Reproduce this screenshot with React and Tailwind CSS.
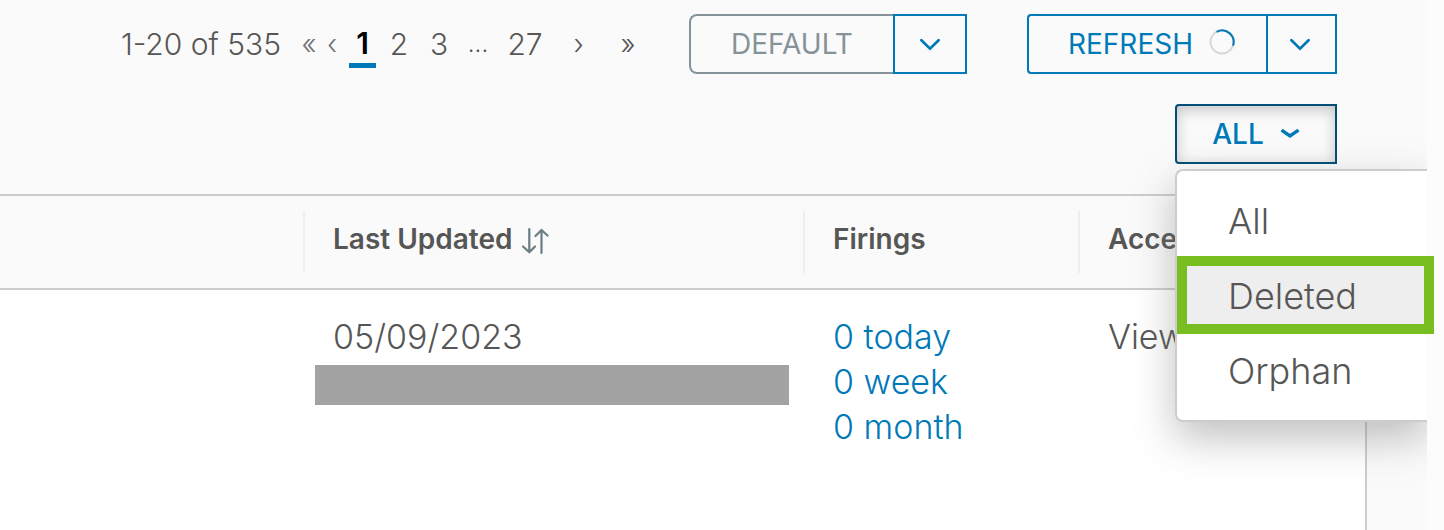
import React from "react";

function Chevron({ small }) {
  return small ? (
    <svg className="h-5 w-5" viewBox="0 0 20 20" fill="none" stroke="currentColor" strokeWidth="3.400" aria-hidden="true">
      <path d="M1.500 6.200 10 12l8.500-5.800" />
    </svg>
  ) : (
    <svg className="h-5 w-5" viewBox="0 0 20 20" fill="none" stroke="currentColor" strokeWidth="2.700" strokeLinecap="round" aria-hidden="true">
      <path d="M1.400 6.200 10 14.700l8.600-8.500" />
    </svg>
  );
}

function Spinner() {
  return (
    <svg className="mb-1 h-[26px] w-[26px]" viewBox="0 0 26 26" fill="none" aria-hidden="true">
      <circle cx="13" cy="13" r="11.500" stroke="#d5d5d5" strokeWidth="1.800" />
      <path d="M7.600 2.850A11.500 11.500 0 0 1 24 16.600" stroke="#0079b8" strokeWidth="2" />
    </svg>
  );
}

function SortIcon() {
  return (
    <svg className="h-7 w-7" viewBox="0 0 28 28" fill="none" stroke="#6a7c84" strokeWidth="2.200" strokeLinecap="round" strokeLinejoin="round" aria-hidden="true">
      <path d="M8.300 2v23M2 19.500l6.300 5.800 5.700-5.800" />
      <path d="M20.500 26V3M14.500 9l6-6 6 5.500" />
    </svg>
  );
}

function Pagination() {
  const item = "flex h-10 items-center justify-center";
  return (
    <nav aria-label="Pages" className="mr-9 flex items-center text-[30px] font-light">
      <span className="mr-[15px]">1-20 of 535</span>
      <button aria-label="First page" className={`${item} w-[26px] text-[28px] text-[#737373]`}>«</button>
      <button aria-label="Previous page" className={`${item} mr-[7px] w-5 text-[28px] text-[#737373]`}>‹</button>
      <button aria-current="page" className="mr-1 flex h-12 w-[27px] items-center justify-center border-b-[5px] border-[#0079b8] pt-1 font-semibold text-black">1</button>
      <button className={`${item} w-[38px]`}>2</button>
      <button className={`${item} w-[42px]`}>3</button>
      <span className={`${item} w-[36px] text-[24px]`}>...</span>
      <button className={`${item} w-[58px]`}>27</button>
      <button aria-label="Next page" className={`${item} w-[49px] text-[28px]`}>›</button>
      <button aria-label="Last page" className={`${item} w-[50px] text-[28px]`}>»</button>
    </nav>
  );
}

function HeadCell({ children }) {
  return (
    <th className="py-[15px] pr-0 text-left font-semibold">
      <div className="flex h-[62px] items-start gap-2 overflow-hidden border-l-2 border-[#eeeeee] pt-2 pl-7 text-[28px] leading-10 whitespace-nowrap">
        {children}
      </div>
    </th>
  );
}

function StatusFilter() {
  const item = "block h-[75px] w-full pl-[51px] text-left";
  return (
    <div className="relative">
      <button aria-haspopup="menu" aria-expanded="true" className="flex h-[60px] w-[162px] items-center justify-center gap-4 rounded-l-[4px] border-2 border-[#004d76] text-[28px] font-medium text-[#0079b8] shadow-[inset_0_4px_14px_#c4c4c4]">
        ALL
        <Chevron small />
      </button>
      <div role="menu" className="absolute top-full left-0 mt-[5px] w-[252px] rounded-l-[8px] border-2 border-r-0 border-[#cccccc] bg-white py-3 text-[36px] font-light shadow-[0_16px_40px_rgba(115,115,115,0.45)]">
        <button role="menuitem" className={item}>All</button>
        <button role="menuitem" className={`${item} relative bg-[#eeeeee]`}>
          Deleted
          <span className="absolute -top-[2px] -bottom-px left-0 z-20 w-[257px] border-[10px] border-[#78be20]" />
        </button>
        <button role="menuitem" className={item}>Orphan</button>
      </div>
    </div>
  );
}

export default function App() {
  const split = "flex h-[60px] items-center justify-center border-2";
  return (
    <div className="flex min-h-screen overflow-hidden bg-[#fafafa] font-[Inter,sans-serif] text-[#565656]">
      <main className="flex min-w-0 flex-1 flex-col">
        <header className="flex flex-col items-end gap-[30px] pt-[14px] pr-[90px] pb-[30px]">
          <div className="flex items-center">
            <Pagination />
            <div className="mr-[60px] flex text-[28px]">
              <button className={`${split} w-[204px] rounded-l-[8px] border-r-0 border-[#859399] text-[#859399]`}>DEFAULT</button>
              <button aria-label="More default options" className={`${split} w-[74px] border-[#0079b8] text-[#0079b8]`}>
                <Chevron />
              </button>
            </div>
            <div className="flex text-[28px] text-[#0079b8]">
              <button className={`${split} w-[239px] gap-4 rounded-l-[4px] border-r-0 border-[#0079b8] pl-2`}>
                REFRESH
                <Spinner />
              </button>
              <button aria-label="More refresh options" className={`${split} w-[71px] border-[#0079b8] pr-1`}>
                <Chevron />
              </button>
            </div>
          </div>
          <StatusFilter />
        </header>
        <div className="mr-[60px] flex-1 border-r-2 border-[#cccccc] bg-white">
          <table className="w-full table-fixed border-collapse">
            <colgroup>
              <col />
              <col className="w-[500px]" />
              <col className="w-[275px]" />
              <col className="w-[287px]" />
            </colgroup>
            <thead className="border-y-2 border-[#cccccc] bg-[#fafafa]">
              <tr>
                <td />
                <HeadCell>
                  Last Updated
                  <button aria-label="Sort by last updated" className="mt-2">
                    <SortIcon />
                  </button>
                </HeadCell>
                <HeadCell>Firings</HeadCell>
                <HeadCell>Access</HeadCell>
              </tr>
            </thead>
            <tbody className="text-[34px] leading-[45px] font-light">
              <tr className="align-top">
                <td />
                <td className="pt-6">
                  <div className="pl-[30px]">05/09/2023</div>
                  <div className="mt-[6px] ml-3 h-10 w-[474px] bg-[#a3a3a3]" />
                </td>
                <td className="pt-6 pl-[30px] text-[#0079b8]">
                  <a href="#today" className="block">0 today</a>
                  <a href="#week" className="block">0 week</a>
                  <a href="#month" className="block">0 month</a>
                </td>
                <td className="pt-6 pl-[30px]">View</td>
              </tr>
            </tbody>
          </table>
        </div>
      </main>
      <div className="relative z-10 w-[17px] bg-[#fcfcfc]" />
    </div>
  );
}
